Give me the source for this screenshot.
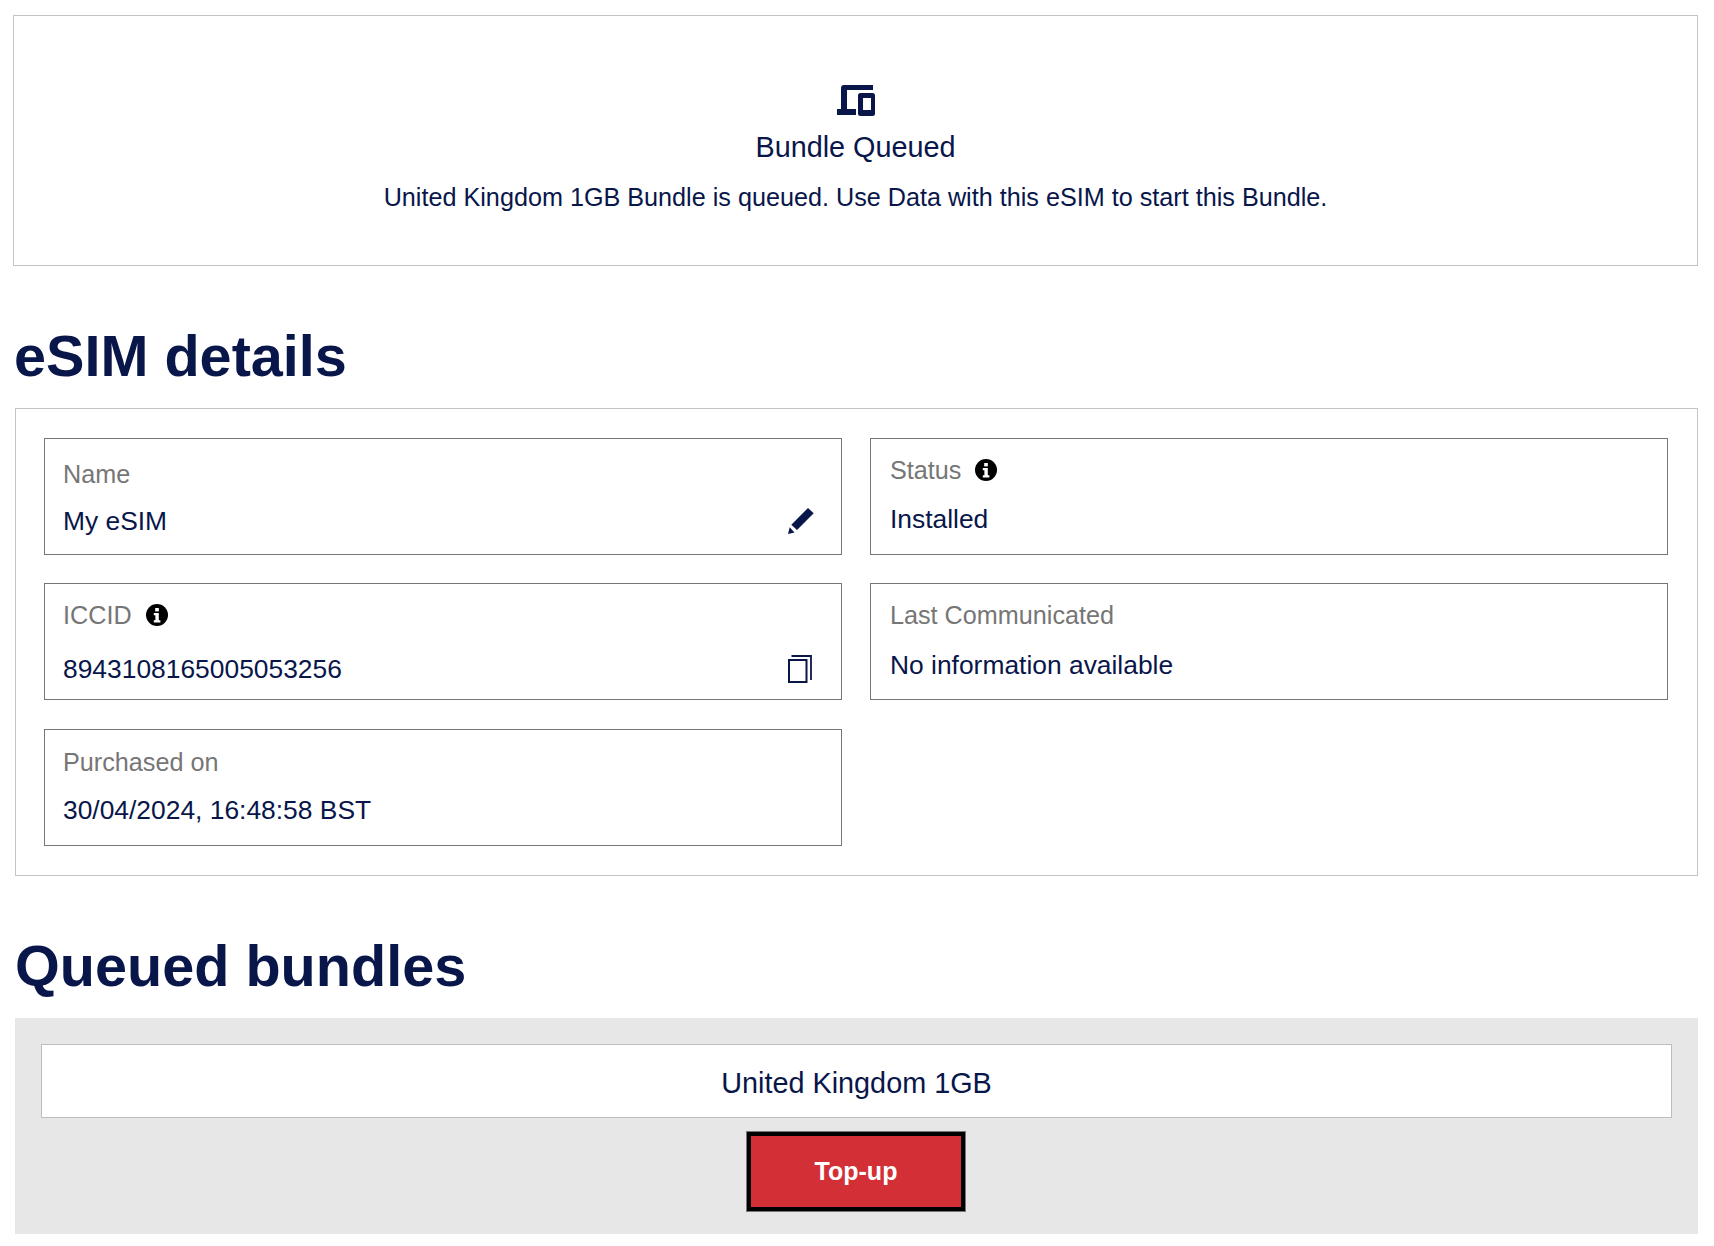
<main class="page">
  <section class="banner">
    <svg class="device" viewBox="0 0 38 31" aria-hidden="true">
      <path d="M4 3a3 3 0 0 1 3-3h29v5H10v19h9v6H0v-6h4z" fill="#08164a"/>
      <path fill-rule="evenodd" d="M23.500 8h12a2.500 2.500 0 0 1 2.500 2.500v18a2.500 2.500 0 0 1-2.500 2.500h-12a2.500 2.500 0 0 1-2.500-2.500v-18A2.500 2.500 0 0 1 23.500 8zM26 13v12h8V13z" fill="#08164a"/>
    </svg>
    <h2 class="banner-title">Bundle Queued</h2>
    <p class="banner-text">United Kingdom 1GB Bundle is queued. Use Data with this eSIM to start this Bundle.</p>
  </section>

  <h1 class="heading first">eSIM details</h1>
  <section class="card">
    <div class="field name">
      <div class="label">Name</div>
      <div class="value-row">
        <span>My eSIM</span>
        <svg class="pencil" viewBox="0 0 26 26" aria-hidden="true">
          <path d="M3.300 16.700 20 0l5.700 5.300L9 22z" fill="#08164a"/>
          <path d="M1.700 19.300 6.500 24.400 0 26z" fill="#08164a"/>
        </svg>
      </div>
    </div>
    <div class="field status">
      <div class="label">Status <svg class="info" viewBox="0 0 22 22" aria-hidden="true"><circle cx="11" cy="11" r="11" fill="#000"/><rect x="9.200" y="4" width="3.600" height="3.400" fill="#fff"/><path d="M7.800 9h5v7.200h1.600V18.500H7.800v-2.300h1.600v-5H7.800z" fill="#fff"/></svg></div>
      <div class="value-row"><span>Installed</span></div>
    </div>
    <div class="field iccid">
      <div class="label">ICCID <svg class="info" viewBox="0 0 22 22" aria-hidden="true"><circle cx="11" cy="11" r="11" fill="#000"/><rect x="9.200" y="4" width="3.600" height="3.400" fill="#fff"/><path d="M7.800 9h5v7.200h1.600V18.500H7.800v-2.300h1.600v-5H7.800z" fill="#fff"/></svg></div>
      <div class="value-row">
        <span>8943108165005053256</span>
        <svg class="copy" viewBox="0 0 24 28" aria-hidden="true">
          <rect x="1" y="5" width="17.500" height="22" fill="none" stroke="#08164a" stroke-width="2"/>
          <path d="M3.500 1H23V25" fill="none" stroke="#08164a" stroke-width="1.800"/>
        </svg>
      </div>
    </div>
    <div class="field last">
      <div class="label">Last Communicated</div>
      <div class="value-row"><span>No information available</span></div>
    </div>
    <div class="field purchased">
      <div class="label">Purchased on</div>
      <div class="value-row"><span>30/04/2024, 16:48:58 BST</span></div>
    </div>
  </section>

  <h1 class="heading second">Queued bundles</h1>
  <section class="queued">
    <div class="bundle">United Kingdom 1GB</div>
    <button class="topup">Top-up</button>
  </section>
</main>

<style>
  :global(body) {
    margin: 0;
    background: #fff;
  }
  .page {
    padding: 15px 16px 12px 13px;
    font-family: "Liberation Sans", Arial, sans-serif;
    color: #08164a;
  }
  .banner {
    height: 251px;
    box-sizing: border-box;
    border: 1px solid #c4c4c4;
    padding-top: 69px;
    text-align: center;
  }
  .device {
    display: block;
    width: 38px;
    height: 31px;
    margin: 0 auto;
  }
  .banner-title {
    margin: 14px 0 0;
    font-size: 28.800px;
    line-height: 34px;
    font-weight: 400;
  }
  .banner-text {
    margin: 16px 0 0;
    font-size: 25.200px;
    line-height: 34px;
  }
  .heading {
    font-size: 57.600px;
    line-height: 70px;
    font-weight: 700;
    margin: 0;
  }
  .first {
    padding-top: 55px;
    height: 87px;
    margin-left: 1px;
  }
  .second {
    padding-top: 55px;
    height: 87px;
    margin-left: 2px;
  }
  .card {
    margin-left: 2px;
    box-sizing: border-box;
    height: 468px;
    border: 1px solid #c4c4c4;
    padding: 28.600px 28px 0;
    display: grid;
    grid-template-columns: 798px 798px;
    column-gap: 28px;
    row-gap: 28.500px;
    align-content: start;
  }
  .field {
    box-sizing: border-box;
    height: 117px;
    border: 1px solid #767676;
    padding: 16px 18px 0;
  }
  .name { padding-top: 20px; }
  .purchased { padding-top: 17px; }
  .status, .last { padding-left: 19px; }
  .label {
    font-size: 25.200px;
    line-height: 30px;
    color: #767676;
    display: flex;
    align-items: center;
    gap: 14px;
  }
  .value-row {
    font-size: 26.400px;
    line-height: 32px;
    display: flex;
    justify-content: space-between;
    align-items: center;
  }
  .name .value-row { margin-top: 16px; }
  .status .value-row { margin-top: 18px; }
  .iccid .value-row { margin-top: 23px; }
  .last .value-row { margin-top: 19px; }
  .purchased .value-row { margin-top: 17px; }
  .info {
    width: 22px;
    height: 22px;
    flex: none;
  }
  .pencil {
    width: 26px;
    height: 26px;
    margin-right: 9px;
  }
  .copy {
    width: 24px;
    height: 28px;
    margin-right: 11px;
  }
  .queued {
    margin-left: 2px;
    height: 216px;
    box-sizing: border-box;
    background: #e7e7e7;
    padding: 26px 26px 0;
    display: flex;
    flex-direction: column;
    align-items: center;
  }
  .bundle {
    width: 100%;
    box-sizing: border-box;
    height: 74px;
    border: 1px solid #bdbdbd;
    background: #fff;
    text-align: center;
    font-size: 28.800px;
    line-height: 76px;
  }
  .topup {
    margin: 13px 1px 0 0;
    width: 220px;
    height: 81px;
    box-sizing: border-box;
    background: #d32f37;
    border: 5px solid #000;
    outline: 1px solid #777;
    outline-offset: -1px;
    color: #fff;
    font-family: inherit;
    font-size: 25px;
    font-weight: 700;
  }
</style>
